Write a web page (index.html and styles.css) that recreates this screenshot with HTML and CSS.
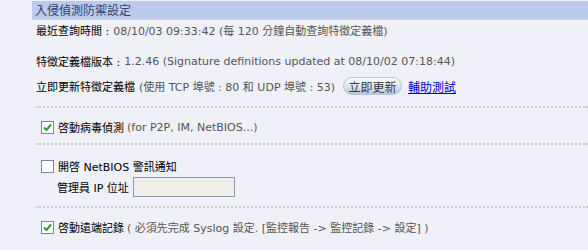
FILE: index.html
```html
<!DOCTYPE html>
<html lang="zh-Hant">
<head>
  <meta charset="UTF-8" />
  <title>入侵偵測防禦設定</title>
  <link rel="stylesheet" href="styles.css">
</head>
<body>
  <div class="panel">
    <div class="title-bar">入侵偵測防禦設定</div>

    <div class="info-row">
      <span class="label">最近查詢時間 :</span>
      <span class="note">08/10/03 09:33:42 (每 120 分鐘自動查詢特徵定義檔)</span>
    </div>
    <div class="info-row second">
      <span class="label">特徵定義檔版本 :</span>
      <span class="note">1.2.46 (Signature definitions updated at 08/10/02 07:18:44)</span>
    </div>
    <div class="info-row third">
      <span class="label">立即更新特徵定義檔</span>
      <span class="note">(使用 TCP 埠號 : 80 和 UDP 埠號 : 53)</span>
      <button class="update-btn">立即更新</button>
      <a class="help-link" href="#">輔助測試</a>
    </div>

    <div class="section virus">
      <label class="check-row">
        <span class="box">
          <svg width="11" height="11" viewBox="0 0 11 11"><path d="M2 5.5 L4.5 8 L9 2.5" fill="none" stroke="#2f9a2f" stroke-width="2"/></svg>
        </span>
        <span class="label">啓動病毒偵測</span>
        <span class="note">(for P2P, IM, NetBIOS...)</span>
      </label>
    </div>

    <div class="section netbios">
      <label class="check-row">
        <span class="box"></span>
        <span class="label">開啓 NetBIOS 警訊通知</span>
      </label>
      <div class="field-row">
        <span class="label">管理員 IP 位址</span>
        <input class="ip-input" type="text" disabled>
      </div>
    </div>

    <div class="section syslog">
      <label class="check-row">
        <span class="box">
          <svg width="11" height="11" viewBox="0 0 11 11"><path d="M2 5.5 L4.5 8 L9 2.5" fill="none" stroke="#2f9a2f" stroke-width="2"/></svg>
        </span>
        <span class="label">啓動遠端記錄</span>
        <span class="note">( 必須先完成 Syslog 設定. [監控報告 -&gt; 監控記錄 -&gt; 設定] )</span>
      </label>
    </div>
  </div>
</body>
</html>
```

FILE: styles.css
```css
* {
  box-sizing: border-box;
}

body {
  margin: 0;
  background: #eff0f8;
  font-family: "DejaVu Sans", "Noto Sans CJK TC", sans-serif;
  font-size: 11px;
  color: #000;
}

.panel {
  padding: 1px 0 0 32px;
}

.title-bar {
  height: 19px;
  line-height: 18px;
  padding-left: 3px;
  background: #bccbec;
  border-bottom: 1px solid #c8d3ee;
  color: #2f4178;
  font-family: "Noto Sans CJK TC", sans-serif;
  font-size: 12px;
}

.info-row {
  height: 20px;
  display: flex;
  align-items: center;
  gap: 4px;
  padding-left: 4px;
}

.info-row.second {
  margin-top: 11px;
}

.info-row.third {
  margin-top: 5px;
}

.label {
  color: #000;
}

.note {
  color: #555;
}

.update-btn {
  margin-left: 4px;
  height: 18px;
  width: 59px;
  padding: 0;
  border: 1px solid #b4c6dc;
  border-radius: 9px;
  background: linear-gradient(#fafcfe, #dde8f4 50%, #b3c8e2);
  font-family: "Noto Sans CJK TC", sans-serif;
  font-size: 12px;
  color: #3a3a3a;
}

.help-link {
  margin-left: 2px;
  color: #0000cc;
  text-decoration: underline;
  font-size: 12px;
}

.section {
  margin-left: 4px;
  border-top: 2px dotted #cbccd4;
  padding-left: 5px;
}

.section.virus {
  margin-top: 10px;
  padding-top: 9px;
  padding-bottom: 6px;
}

.section.netbios {
  padding-top: 11px;
  padding-bottom: 9px;
}

.section.syslog {
  padding-top: 9px;
}

.check-row {
  height: 20px;
  display: flex;
  align-items: center;
  gap: 3px;
}

.box {
  width: 13px;
  height: 13px;
  border: 1px solid #7a8a99;
  background: #fff;
  margin-right: 1px;
  display: flex;
  align-items: center;
  justify-content: center;
}

.field-row {
  height: 20px;
  display: flex;
  align-items: center;
  gap: 4px;
  padding-left: 16px;
  margin-top: 1px;
}

.ip-input {
  width: 102px;
  height: 20px;
  border: 1px solid #8a9db5;
  background: #f2eeea;
}
```
